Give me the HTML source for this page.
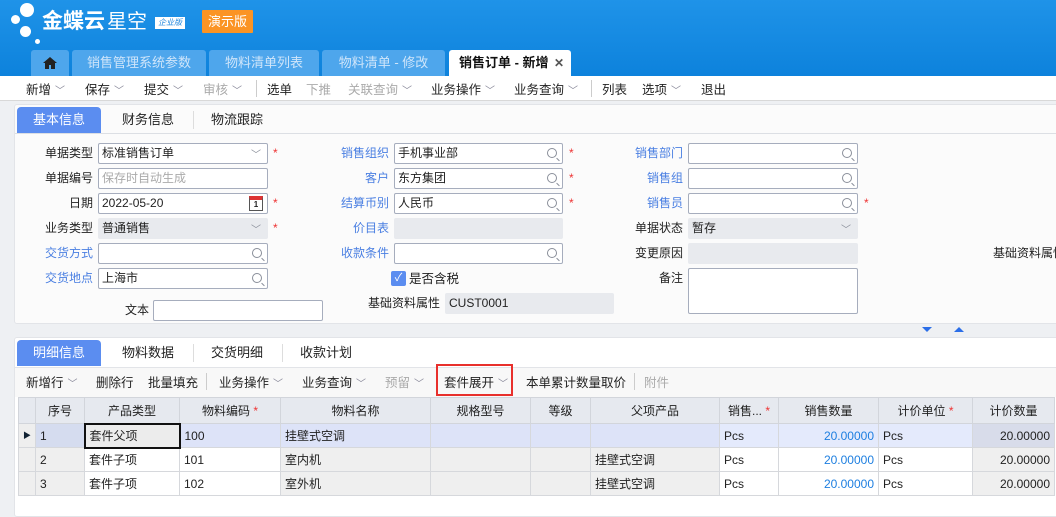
<!DOCTYPE html>
<html><head><meta charset="utf-8"><style>
*{margin:0;padding:0;box-sizing:border-box}
body{width:1056px;height:510px;overflow:hidden;position:relative;background:#eef0f3;font-family:"Liberation Sans","Noto Sans CJK SC",sans-serif;font-size:12px;color:#222}
.a{position:absolute;white-space:nowrap}
.hdr{left:0;top:0;width:1056px;height:76px;background:linear-gradient(180deg,#1f93e8,#0d82dc)}
.c{position:absolute;background:#fff;border-radius:50%}
.tab{position:absolute;top:50px;height:26px;background:#4ea6ec;border-radius:3px 3px 0 0;color:#cfe5fa;font-size:13px;line-height:26px;text-align:center}
.tb{left:0;top:76px;width:1056px;height:25px;background:#fff;border-bottom:1px solid #d8d8d8}
.ti{position:absolute;top:3px;font-size:12.5px;color:#222}
.dis{color:#aaa}
.v{color:#889;font-size:10px;margin-left:4px}
.panel{position:absolute;background:#fbfbfb;border:1px solid #e2e4e8;border-radius:3px}
.btab{position:absolute;height:26px;line-height:26px;font-size:13px;text-align:center}
.on{background:#5b8df0;color:#fff;border-radius:4px 4px 0 0}
.lbl{position:absolute;text-align:right;font-size:12px;line-height:20px}
.bl{color:#4a7fe2}
.in{position:absolute;height:21px;border:1px solid #a6adbd;border-radius:2px;background:#fff;font-size:12px;line-height:19px;padding-left:3px}
.gr{background:#e8eaee;border-color:#e8eaee}
.st{position:absolute;color:#e33;font-size:12px}
.q{position:absolute;right:5px;top:4px;width:10px;height:10px;border:1px solid #8a8f9a;border-radius:50%}
.q:after{content:"";position:absolute;right:-4px;bottom:-3px;width:4px;height:1px;background:#8a8f9a;transform:rotate(45deg)}
.dd{position:absolute;right:6px;top:2px;color:#8a8f9a;font-size:10px}
table{position:absolute;left:18px;top:397px;border-collapse:collapse;font-size:12px;table-layout:fixed}
td{height:24px;border:1px solid #d6d8dc;padding:0 4px;white-space:nowrap;overflow:hidden}
th{height:26px;background:#e6e9ef;border:1px solid #d2d5db;font-weight:normal;color:#222}
.num{text-align:right;color:#1e7fe0}
.g{background:#efefef}
.t2{top:372px;font-size:12.5px}
</style></head><body>
<div class="a hdr"></div>
<div class="c" style="left:20px;top:3px;width:14px;height:14px"></div>
<div class="c" style="left:11px;top:15px;width:9px;height:9px"></div>
<div class="c" style="left:20px;top:26px;width:11px;height:11px"></div>
<div class="c" style="left:35px;top:39px;width:5px;height:5px"></div>
<div class="a" style="left:42px;top:8px;color:#fff;font-size:21px;font-weight:bold;line-height:28px">金蝶云</div>
<div class="a" style="left:107px;top:8px;color:#fff;font-size:20px;line-height:28px">星空</div>
<div class="a" style="left:155px;top:17px;width:30px;height:12px;background:#fff;color:#1e86dd;font-size:8px;line-height:12px;text-align:center;font-style:italic">企业版</div>
<div class="a" style="left:202px;top:10px;width:51px;height:23px;background:#fb9424;color:#fff;font-size:13px;line-height:23px;text-align:center;border-radius:1px">演示版</div>
<div class="tab" style="left:31px;width:38px;color:#222">
<svg width="14" height="12" viewBox="0 0 14 12" style="margin-top:7px"><path d="M7 0L0 6h2v6h4V8h2v4h4V6h2z" fill="#222"/></svg></div>
<div class="tab" style="left:72px;width:134px">销售管理系统参数</div>
<div class="tab" style="left:209px;width:110px">物料清单列表</div>
<div class="tab" style="left:322px;width:123px">物料清单 - 修改</div>
<div class="tab" style="left:449px;width:122px;background:#fff;color:#111;font-weight:bold;text-align:left;padding-left:10px">销售订单 - 新增<span style="position:absolute;left:105px;color:#555;font-size:12px">✕</span></div>
<div class="a tb">
<span class="ti" style="left:26px">新增<span class="v">﹀</span></span>
<span class="ti" style="left:85px">保存<span class="v">﹀</span></span>
<span class="ti" style="left:144px">提交<span class="v">﹀</span></span>
<span class="ti dis" style="left:203px">审核<span class="v">﹀</span></span>
<span class="a" style="left:256px;top:4px;width:1px;height:17px;background:#ccc"></span>
<span class="ti" style="left:267px">选单</span>
<span class="ti dis" style="left:306px">下推</span>
<span class="ti dis" style="left:348px">关联查询<span class="v">﹀</span></span>
<span class="ti" style="left:431px">业务操作<span class="v">﹀</span></span>
<span class="ti" style="left:514px">业务查询<span class="v">﹀</span></span>
<span class="a" style="left:591px;top:4px;width:1px;height:17px;background:#ccc"></span>
<span class="ti" style="left:602px">列表</span>
<span class="ti" style="left:642px">选项<span class="v">﹀</span></span>
<span class="ti" style="left:701px">退出</span>
</div>

<div class="panel" style="left:14px;top:104px;width:1050px;height:220px"></div>
<div class="a" style="left:15px;top:133px;width:1041px;height:1px;background:#dcdfe4"></div>
<div class="btab on" style="left:17px;top:107px;width:84px">基本信息</div>
<div class="btab" style="left:122px;top:107px">财务信息</div>
<div class="a" style="left:193px;top:111px;width:1px;height:18px;background:#ddd"></div>
<div class="btab" style="left:211px;top:107px">物流跟踪</div>

<div class="lbl" style="left:20px;width:73px;top:143px">单据类型</div>
<div class="in" style="left:98px;top:143px;width:170px">标准销售订单<span class="dd">﹀</span></div><span class="st" style="left:273px;top:146px">*</span>
<div class="lbl" style="left:20px;width:73px;top:168px">单据编号</div>
<div class="in" style="left:98px;top:168px;width:170px;color:#aaa">保存时自动生成</div>
<div class="lbl" style="left:20px;width:73px;top:193px">日期</div>
<div class="in" style="left:98px;top:193px;width:170px">2022-05-20<span class="a" style="right:4px;top:2px;width:14px;height:15px;border:1px solid #555;border-top:4px solid #d33;font-size:8px;line-height:9px;text-align:center;font-weight:bold">1</span></div><span class="st" style="left:273px;top:196px">*</span>
<div class="lbl" style="left:20px;width:73px;top:218px">业务类型</div>
<div class="in gr" style="left:98px;top:218px;width:170px">普通销售<span class="dd">﹀</span></div><span class="st" style="left:273px;top:221px">*</span>
<div class="lbl bl" style="left:20px;width:73px;top:243px">交货方式</div>
<div class="in" style="left:98px;top:243px;width:170px"><span class="q"></span></div>
<div class="lbl bl" style="left:20px;width:73px;top:268px">交货地点</div>
<div class="in" style="left:98px;top:268px;width:170px">上海市<span class="q"></span></div>
<div class="lbl" style="left:100px;width:49px;top:300px">文本</div>
<div class="in" style="left:153px;top:300px;width:170px"></div>

<div class="lbl bl" style="left:300px;width:89px;top:143px">销售组织</div>
<div class="in" style="left:394px;top:143px;width:169px">手机事业部<span class="q"></span></div><span class="st" style="left:569px;top:146px">*</span>
<div class="lbl bl" style="left:300px;width:89px;top:168px">客户</div>
<div class="in" style="left:394px;top:168px;width:169px">东方集团<span class="q"></span></div><span class="st" style="left:569px;top:171px">*</span>
<div class="lbl bl" style="left:300px;width:89px;top:193px">结算币别</div>
<div class="in" style="left:394px;top:193px;width:169px">人民币<span class="q"></span></div><span class="st" style="left:569px;top:196px">*</span>
<div class="lbl bl" style="left:300px;width:89px;top:218px">价目表</div>
<div class="in gr" style="left:394px;top:218px;width:169px"></div>
<div class="lbl bl" style="left:300px;width:89px;top:243px">收款条件</div>
<div class="in" style="left:394px;top:243px;width:169px"><span class="q"></span></div>
<div class="a" style="left:391px;top:271px;width:15px;height:15px;background:#5b8df0;border-radius:2px;color:#fff;font-size:11px;line-height:15px;text-align:center">✓</div>
<div class="a" style="left:409px;top:269px;font-size:12.5px;line-height:20px">是否含税</div>
<div class="lbl" style="left:340px;width:100px;top:293px">基础资料属性</div>
<div class="in gr" style="left:445px;top:293px;width:169px">CUST0001</div>

<div class="lbl bl" style="left:600px;width:83px;top:143px">销售部门</div>
<div class="in" style="left:688px;top:143px;width:170px"><span class="q"></span></div>
<div class="lbl bl" style="left:600px;width:83px;top:168px">销售组</div>
<div class="in" style="left:688px;top:168px;width:170px"><span class="q"></span></div>
<div class="lbl bl" style="left:600px;width:83px;top:193px">销售员</div>
<div class="in" style="left:688px;top:193px;width:170px"><span class="q"></span></div><span class="st" style="left:864px;top:196px">*</span>
<div class="lbl" style="left:600px;width:83px;top:218px">单据状态</div>
<div class="in gr" style="left:688px;top:218px;width:170px">暂存<span class="dd">﹀</span></div>
<div class="lbl" style="left:600px;width:83px;top:243px">变更原因</div>
<div class="in gr" style="left:688px;top:243px;width:170px"></div>
<div class="lbl" style="left:600px;width:83px;top:268px">备注</div>
<div class="in" style="left:688px;top:268px;width:170px;height:46px"></div>
<div class="a" style="left:993px;top:243px;line-height:20px">基础资料属性</div>
<div class="a" style="left:922px;top:327px;width:0;height:0;border:5px solid transparent;border-top:5px solid #2b6ee8"></div>
<div class="a" style="left:954px;top:322px;width:0;height:0;border:5px solid transparent;border-bottom:5px solid #2b6ee8"></div>

<div class="panel" style="left:14px;top:337px;width:1050px;height:180px;background:#fff"></div>
<div class="btab on" style="left:17px;top:340px;width:84px">明细信息</div>
<div class="btab" style="left:122px;top:340px">物料数据</div>
<div class="a" style="left:193px;top:344px;width:1px;height:18px;background:#ddd"></div>
<div class="btab" style="left:211px;top:340px">交货明细</div>
<div class="a" style="left:282px;top:344px;width:1px;height:18px;background:#ddd"></div>
<div class="btab" style="left:300px;top:340px">收款计划</div>
<div class="a" style="left:15px;top:367px;width:1041px;height:30px;background:#f8f8f8;border-top:1px solid #e2e4e8"></div>
<div class="a t2" style="left:26px">新增行<span class="v">﹀</span></div>
<div class="a t2" style="left:96px">删除行</div>
<div class="a t2" style="left:148px">批量填充</div>
<div class="a" style="left:206px;top:373px;width:1px;height:17px;background:#ccc"></div>
<div class="a t2" style="left:219px">业务操作<span class="v">﹀</span></div>
<div class="a t2" style="left:302px">业务查询<span class="v">﹀</span></div>
<div class="a t2" style="left:385px;color:#aaa">预留<span class="v">﹀</span></div>
<div class="a" style="left:436px;top:364px;width:77px;height:32px;border:2px solid #e8302c"></div>
<div class="a t2" style="left:444px">套件展开<span class="v">﹀</span></div>
<div class="a t2" style="left:526px">本单累计数量取价</div>
<div class="a" style="left:634px;top:373px;width:1px;height:17px;background:#ccc"></div>
<div class="a t2" style="left:644px;color:#aaa">附件</div>

<table>
<colgroup><col style="width:16px"><col style="width:49px"><col style="width:95px"><col style="width:101px"><col style="width:150px"><col style="width:100px"><col style="width:60px"><col style="width:129px"><col style="width:59px"><col style="width:100px"><col style="width:94px"><col style="width:82px"></colgroup>
<tr><th></th><th>序号</th><th>产品类型</th><th>物料编码 <span style="color:#e33">*</span></th><th>物料名称</th><th>规格型号</th><th>等级</th><th>父项产品</th><th>销售... <span style="color:#e33">*</span></th><th>销售数量</th><th>计价单位 <span style="color:#e33">*</span></th><th>计价数量</th></tr>
<tr style="background:#dde3f8"><td class="g" style="background:#eee;font-size:8px;color:#123">▶</td><td style="background:#d5dcef">1</td><td style="background:#ececec;border:2px solid #111">套件父项</td><td>100</td><td>挂壁式空调</td><td></td><td></td><td></td><td style="background:#e4eafc">Pcs</td><td class="num" style="background:#e4eafc">20.00000</td><td style="background:#e4eafc">Pcs</td><td style="text-align:right;background:#d8dcea">20.00000</td></tr>
<tr><td class="g"></td><td class="g">2</td><td>套件子项</td><td>101</td><td class="g">室内机</td><td class="g"></td><td class="g"></td><td class="g">挂壁式空调</td><td>Pcs</td><td class="num">20.00000</td><td>Pcs</td><td class="g" style="text-align:right">20.00000</td></tr>
<tr><td class="g"></td><td class="g">3</td><td>套件子项</td><td>102</td><td class="g">室外机</td><td class="g"></td><td class="g"></td><td class="g">挂壁式空调</td><td>Pcs</td><td class="num">20.00000</td><td>Pcs</td><td class="g" style="text-align:right">20.00000</td></tr>
</table>
</body></html>
